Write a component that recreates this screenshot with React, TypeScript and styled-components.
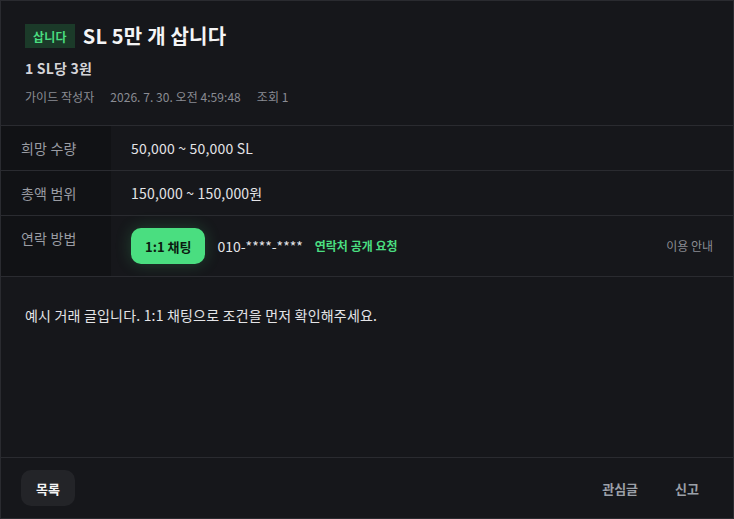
import React from "react";
import styled, { createGlobalStyle } from "styled-components";

const Global = createGlobalStyle`
  html, body { margin: 0; padding: 0; background: #16171b; }
  body { font-family: "Noto Sans CJK KR", "Noto Sans", sans-serif; letter-spacing: 0.012em; }
  * { box-sizing: border-box; }
`;

const Card = styled.div`
  width: 734px;
  height: 519px;
  background: #16171b;
  border: 1px solid #2a2b30;
  display: flex;
  flex-direction: column;
  color: #e4e4e7;
`;

const Header = styled.div`
  padding: 22px 24px 19px;
  display: flex;
  flex-direction: column;
`;

const TitleRow = styled.div`
  display: flex;
  align-items: center;
  gap: 8px;
  height: 26px;
`;

const Badge = styled.span`
  display: inline-flex;
  align-items: center;
  height: 24px;
  padding: 0 8px;
  background: #1b3a29;
  color: #4ade80;
  font-size: 12px;
  font-weight: 700;
`;

const Title = styled.h1`
  margin: 0;
  font-size: 20px;
  line-height: 26px;
  font-weight: 700;
  color: #f4f4f5;
`;

const Price = styled.div`
  margin-top: 9px;
  font-size: 14px;
  line-height: 20px;
  font-weight: 700;
  color: #d4d4d8;
`;

const Meta = styled.div`
  margin-top: 10px;
  display: flex;
  gap: 16px;
  font-size: 12px;
  line-height: 18px;
  letter-spacing: 0.004em;
  color: #8a8c93;
`;

const Table = styled.div`
  display: flex;
  flex-direction: column;
`;

const Row = styled.div`
  display: flex;
  border-top: 1px solid #2a2b30;
`;

const Label = styled.div`
  width: 110px;
  flex-shrink: 0;
  background: #111215;
  padding: 12px 20px;
  font-size: 14px;
  line-height: 20px;
  color: #9a9ca3;
`;

const Value = styled.div`
  flex: 1;
  padding: 12px 20px;
  font-size: 14px;
  line-height: 20px;
  color: #e4e4e7;
  display: flex;
  align-items: center;
  gap: 12px;
`;

const ChatButton = styled.button`
  height: 36px;
  padding: 0 14px;
  border: none;
  border-radius: 10px;
  background: #4ade80;
  color: #0b1a10;
  font-family: inherit;
  letter-spacing: 0;
  font-size: 13px;
  font-weight: 700;
  box-shadow: 0 0 16px rgba(74, 222, 128, 0.22);
`;

const Phone = styled.span`
  font-size: 14px;
  letter-spacing: 0;
  color: #e4e4e7;
`;

const RequestLink = styled.span`
  font-size: 12px;
  font-weight: 700;
  letter-spacing: 0;
  color: #4ade80;
`;

const Guide = styled.span`
  margin-left: auto;
  font-size: 12px;
  letter-spacing: 0;
  color: #8a8c93;
`;

const Body = styled.div`
  flex: 1;
  border-top: 1px solid #2a2b30;
  padding: 28px 24px;
  font-size: 14px;
  line-height: 21px;
  color: #e4e4e7;
`;

const Footer = styled.div`
  border-top: 1px solid #2a2b30;
  padding: 12px 20px;
  display: flex;
  align-items: center;
`;

const ListButton = styled.button`
  height: 36px;
  padding: 0 15px;
  border: none;
  border-radius: 10px;
  background: #232428;
  color: #f4f4f5;
  font-family: inherit;
  letter-spacing: 0;
  font-size: 13px;
  font-weight: 700;
`;

const Actions = styled.div`
  margin-left: auto;
  display: flex;
  gap: 9px;
`;

const GhostButton = styled.button`
  height: 36px;
  padding: 0 14px;
  border: none;
  background: transparent;
  color: #9ca0a8;
  font-family: inherit;
  letter-spacing: 0;
  font-size: 13px;
  font-weight: 700;
`;

export default function App() {
  return (
    <>
      <Global />
      <Card>
        <Header>
          <TitleRow>
            <Badge>삽니다</Badge>
            <Title>SL 5만 개 삽니다</Title>
          </TitleRow>
          <Price>1 SL당 3원</Price>
          <Meta>
            <span>가이드 작성자</span>
            <span>2026. 7. 30. 오전 4:59:48</span>
            <span>조회 1</span>
          </Meta>
        </Header>
        <Table>
          <Row>
            <Label>희망 수량</Label>
            <Value>50,000 ~ 50,000 SL</Value>
          </Row>
          <Row>
            <Label>총액 범위</Label>
            <Value>150,000 ~ 150,000원</Value>
          </Row>
          <Row>
            <Label>연락 방법</Label>
            <Value>
              <ChatButton>1:1 채팅</ChatButton>
              <Phone>010-****-****</Phone>
              <RequestLink>연락처 공개 요청</RequestLink>
              <Guide>이용 안내</Guide>
            </Value>
          </Row>
        </Table>
        <Body>예시 거래 글입니다. 1:1 채팅으로 조건을 먼저 확인해주세요.</Body>
        <Footer>
          <ListButton>목록</ListButton>
          <Actions>
            <GhostButton>관심글</GhostButton>
            <GhostButton>신고</GhostButton>
          </Actions>
        </Footer>
      </Card>
    </>
  );
}
